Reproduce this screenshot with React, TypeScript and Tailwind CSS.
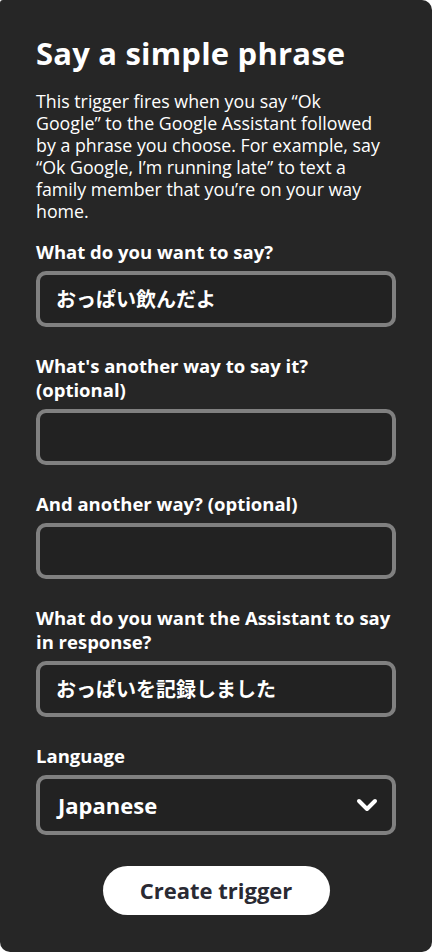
import React from 'react';

const fields = [
  { label: "What do you want to say?", value: "おっぱい飲んだよ" },
  { label: "What's another way to say it? (optional)", value: "" },
  { label: "And another way? (optional)", value: "" },
  { label: "What do you want the Assistant to say in response?", value: "おっぱいを記録しました" },
];

const font = { fontFamily: '"Open Sans", "Noto Sans CJK JP", sans-serif' };

const App = () => {
  return (
    <div className="min-h-screen bg-white" style={font}>
      <div className="h-[952px] bg-[#262626] rounded-[10px] rounded-tl-[3px] px-9 pt-[35px] text-white">
        <h1 className="text-[31px] leading-9 font-bold tracking-[0.2px]">Say a simple phrase</h1>
        {/* line breaks kept as in the original layout */}
        <p className="mt-[19px] text-[17.8px] leading-[22px] whitespace-nowrap">
          This trigger fires when you say “Ok<br />
          Google” to the Google Assistant followed<br />
          by a phrase you choose. For example, say<br />
          “Ok Google, I’m running late” to text a<br />
          family member that you’re on your way<br />
          home.
        </p>

        <div className="mt-[18px] flex flex-col gap-[27px]">
          {fields.map((f) => (
            <div key={f.label}>
              <div className="text-[18.5px] leading-6 font-bold">{f.label}</div>
              <div className="mt-[7px] h-14 rounded-[10px] border-4 border-[#808080] bg-[#222222] px-4 flex items-center">
                <span className="text-[20px] font-bold" style={{ fontFamily: '"Noto Sans CJK JP", sans-serif' }}>{f.value}</span>
              </div>
            </div>
          ))}

          <div>
            <div className="text-[18.5px] leading-6 font-bold">Language</div>
            <div className="mt-[7px] h-[60px] rounded-[10px] border-4 border-[#808080] bg-[#222222] pl-[18px] pr-[14px] flex items-center justify-between">
              <span className="text-[22px] font-bold">Japanese</span>
              <svg width="22" height="14" viewBox="0 0 22 14" fill="none">
                <path d="M3 3l8 8 8-8" stroke="white" strokeWidth="4" strokeLinecap="round" strokeLinejoin="round" />
              </svg>
            </div>
          </div>
        </div>

        <div className="mt-[31px] flex justify-center">
          <button className="w-[227px] h-[49px] rounded-full bg-white text-[#2a2a33] text-[22px] font-bold">
            Create trigger
          </button>
        </div>
      </div>
    </div>
  );
};

export default App;
